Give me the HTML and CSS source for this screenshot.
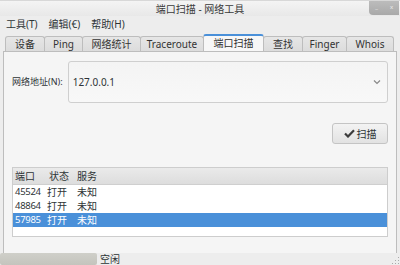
FILE: index.html
```html
<!DOCTYPE html>
<html lang="zh-CN">
<head>
    <meta charset="UTF-8">
    <title>端口扫描 - 网络工具</title>
    <link rel="stylesheet" href="styles.css">
</head>
<body>
    <div class="window">
        <div class="titlebar">
            <span class="title">端口扫描 - 网络工具</span>
            <div class="wm-buttons">
                <span class="wm-btn">_</span>
                <span class="wm-btn">x</span>
            </div>
        </div>

        <div class="menubar">
            <span class="menu">工具(T)</span>
            <span class="menu">编辑(€)</span>
            <span class="menu">帮助(H)</span>
        </div>

        <div class="notebook">
            <div class="tabs">
                <span class="tab w39">设备</span>
                <span class="tab w38">Ping</span>
                <span class="tab w58">网络统计</span>
                <span class="tab w63">Traceroute</span>
                <span class="tab w60 active">端口扫描</span>
                <span class="tab w39">查找</span>
                <span class="tab w44">Finger</span>
                <span class="tab w47">Whois</span>
            </div>
            <div class="page">
                <div class="addr-row">
                    <label class="addr-label">网络地址(N):</label>
                    <div class="combo">
                        <span class="combo-text">127.0.0.1</span>
                        <svg class="chevron" width="8" height="6" viewBox="0 0 8 6">
                            <path d="M1 1.5 L4 4.5 L7 1.5" fill="none" stroke="#888" stroke-width="1.2"/>
                        </svg>
                    </div>
                </div>
                <div class="btn-row">
                    <button class="btn">
                        <svg width="11" height="9" viewBox="0 0 11 9">
                            <path d="M1 4.5 L4 7.5 L10 1.2" fill="none" stroke="#3c3c3c" stroke-width="2.2"/>
                        </svg>
                        扫描
                    </button>
                </div>
                <div class="list">
                    <div class="list-head">
                        <span class="col-port">端口</span>
                        <span class="col-state">状态</span>
                        <span class="col-svc">服务</span>
                    </div>
                    <div class="list-row">
                        <span class="col-port">45524</span>
                        <span class="col-state">打开</span>
                        <span class="col-svc">未知</span>
                    </div>
                    <div class="list-row">
                        <span class="col-port">48864</span>
                        <span class="col-state">打开</span>
                        <span class="col-svc">未知</span>
                    </div>
                    <div class="list-row selected">
                        <span class="col-port">57985</span>
                        <span class="col-state">打开</span>
                        <span class="col-svc">未知</span>
                    </div>
                </div>
            </div>
        </div>

        <div class="statusbar">
            <div class="progress"></div>
            <span class="status-text">空闲</span>
            <span class="grip"></span>
        </div>
    </div>
</body>
</html>
```

FILE: styles.css
```css
* {
    margin: 0;
    padding: 0;
    box-sizing: border-box;
}

body {
    width: 400px;
    height: 265px;
    overflow: hidden;
    background-color: #ededed;
    font-family: "Noto Sans", "Noto Sans CJK SC", sans-serif;
    font-size: 10px;
    line-height: 1.2;
    color: #2e3436;
    white-space: nowrap;
}

.window {
    width: 400px;
    height: 265px;
    display: flex;
    flex-direction: column;
    background-color: #ededed;
}

.titlebar {
    height: 16px;
    position: relative;
    display: flex;
    justify-content: center;
    align-items: center;
    background: linear-gradient(#f4f4f4, #e8e8e8);
    border-top: 1px solid #d8d8d8;
}

.title {
    font-size: 10px;
    color: #3a3a3a;
}

.wm-buttons {
    position: absolute;
    right: 1px;
    top: 0;
    display: flex;
    height: 14px;
    background: linear-gradient(#bcbcbc, #a9a9a9);
    border-radius: 0 0 0 4px;
}

.wm-btn {
    width: 15px;
    font-size: 6px;
    color: #eee;
    text-align: center;
    line-height: 13px;
}

.menubar {
    height: 16px;
    display: flex;
    align-items: center;
    padding-left: 6px;
    gap: 11px;
}

.notebook {
    flex: 1;
    display: flex;
    flex-direction: column;
    padding: 0 3px;
}

.tabs {
    display: flex;
    padding-left: 2px;
    height: 15px;
    margin-top: 4px;
}

.tab {
    height: 15px;
    border: 1px solid #bdbdbd;
    border-bottom: none;
    border-radius: 3px 3px 0 0;
    background: linear-gradient(#e6e6e6, #dcdcdc);
    display: flex;
    align-items: center;
    justify-content: center;
    margin-right: -1px;
    color: #333;
}

.w38 { width: 39px; }
.w39 { width: 40px; }
.w44 { width: 45px; }
.w47 { width: 48px; }
.w58 { width: 59px; }
.w60 { width: 61px; }
.w63 { width: 64px; }

.tab.active {
    height: 17px;
    margin-top: -2px;
    background: #f7f7f7;
    border-top: 2px solid #4a90d9;
    position: relative;
    z-index: 1;
    margin-bottom: -1px;
    padding-bottom: 1px;
}

.page {
    flex: 1;
    background-color: #f5f5f5;
    border: 1px solid #bdbdbd;
    border-bottom: none;
    padding: 9px 8px 0 8px;
}

.addr-row {
    display: flex;
    align-items: center;
    gap: 5px;
}

.addr-label {
    font-size: 9px;
}

.combo {
    flex: 1;
    height: 42px;
    border: 1px solid #cfcfcf;
    border-radius: 3px;
    background: linear-gradient(#f4f4f4, #f8f8f8);
    display: flex;
    align-items: center;
    justify-content: space-between;
    padding: 0 6px 0 4px;
}

.btn-row {
    display: flex;
    justify-content: flex-end;
    margin-top: 20px;
}

.btn {
    width: 56px;
    height: 21px;
    border: 1px solid #c4c4c4;
    border-radius: 3px;
    background: linear-gradient(#f3f3f3, #e2e2e2);
    font-family: inherit;
    font-size: 10px;
    color: #2e3436;
    display: flex;
    align-items: center;
    justify-content: center;
    gap: 2px;
}

.list {
    margin-top: 23px;
    height: 70px;
    border: 1px solid #cdcdcd;
    background: #fff;
}

.list-head {
    height: 17px;
    display: flex;
    align-items: center;
    background: linear-gradient(#eaeaea, #dddddd);
    border-bottom: 1px solid #cfcfcf;
}

.list-head .col-state {
    padding-left: 2px;
}

.list-row {
    height: 14px;
    display: flex;
    align-items: center;
}

.list-row .col-port {
    font-size: 9.5px;
    letter-spacing: -0.3px;
}

.list-row.selected {
    background: #4a90d9;
    color: #fff;
}

.col-port {
    width: 34px;
    padding-left: 2px;
}

.col-state {
    width: 30px;
}

.statusbar {
    height: 12px;
    display: flex;
    align-items: center;
    position: relative;
}

.progress {
    width: 97px;
    height: 12px;
    background: linear-gradient(#cfcfc9, #c4c4bd);
    border-radius: 2px;
}

.status-text {
    margin-left: 3px;
}

.grip {
    position: absolute;
    right: 1px;
    bottom: 1px;
    width: 8px;
    height: 8px;
    background: radial-gradient(circle, #aaa 0.8px, transparent 1px) 0 0 / 3px 3px;
    clip-path: polygon(100% 0, 100% 100%, 0 100%);
}
```
